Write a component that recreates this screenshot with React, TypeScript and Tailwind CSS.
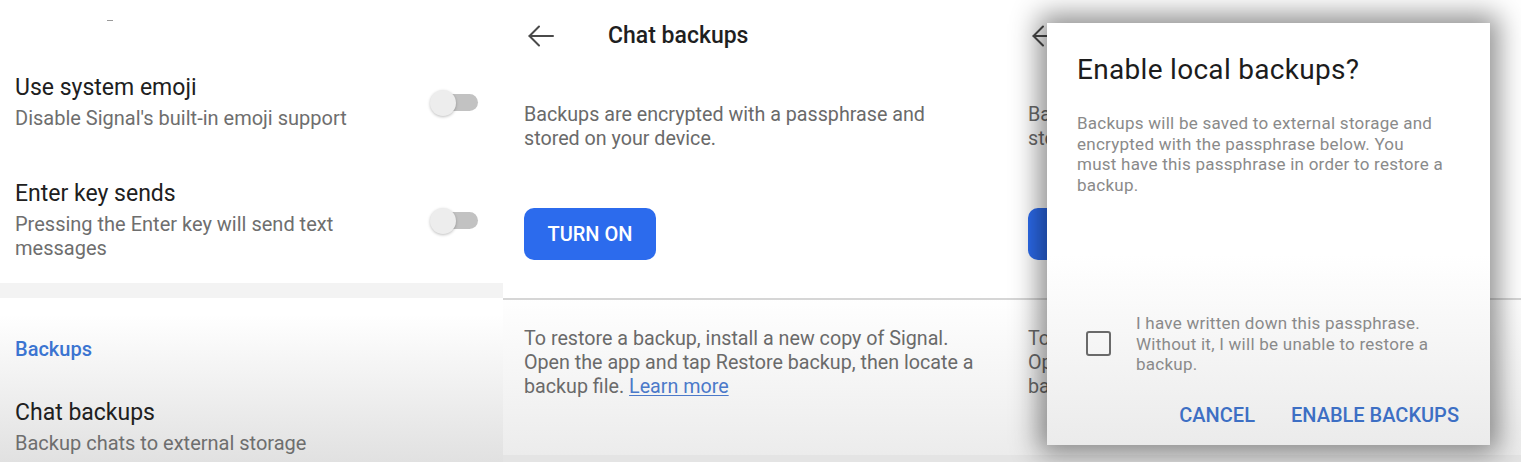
import React from "react";

const font = { fontFamily: "Roboto, 'Noto Sans', sans-serif" };

function BackArrow() {
  return (
    <svg width="26" height="22" viewBox="0 0 26 22" fill="none" stroke="#4a4a4a" strokeWidth="2" strokeLinecap="round" strokeLinejoin="round">
      <path d="M25 11H1.5" />
      <path d="M11 1.5L1.5 11 11 20.5" />
    </svg>
  );
}

function Toggle() {
  return (
    <div className="relative flex h-[26px] w-[48px] items-center">
      <div className="ml-[8px] h-[17px] w-[40px] rounded-full bg-[#c2c2c2]" />
      <div className="absolute left-0 top-0 h-[26px] w-[26px] rounded-full bg-[#ededed] shadow-[0_1px_3px_rgba(0,0,0,0.25)]" />
    </div>
  );
}

function SettingRow({ title, lines }: { title: string; lines: string[] }) {
  return (
    <div className="flex items-center justify-between pr-[25px]">
      <div>
        <div className="text-[23px] leading-[26px] text-[#202020]">{title}</div>
        <div className="mt-[5px] text-[20px] leading-[24px] text-[#6e6e6e]">
          {lines.map((l) => (
            <div key={l} className="whitespace-nowrap">{l}</div>
          ))}
        </div>
      </div>
      <Toggle />
    </div>
  );
}

function SettingsPanel() {
  return (
    <div className="flex h-[462px] w-[503px] shrink-0 flex-col bg-white">
      <div className="h-[75px] pl-[107px] pt-[20px]">
        <div className="h-[1px] w-[6px] bg-[#9a9a9a]" />
      </div>
      <div className="pl-[15px]">
        <SettingRow title="Use system emoji" lines={["Disable Signal's built-in emoji support"]} />
        <div className="h-[51px]" />
        <SettingRow title="Enter key sends" lines={["Pressing the Enter key will send text", "messages"]} />
      </div>
      <div className="mt-[23px] h-[15px] bg-[#f3f3f3]" />
      <div className="flex-1 bg-gradient-to-b from-white from-[10%] to-[#e1e1e1] pl-[15px]">
        <div className="mt-[39px] text-[20px] font-medium leading-[24px] text-[#3b74d1]">Backups</div>
        <div className="mt-[39px] text-[23px] leading-[26px] text-[#202020]">Chat backups</div>
        <div className="mt-[5px] text-[20px] leading-[24px] text-[#6e6e6e]">Backup chats to external storage</div>
      </div>
    </div>
  );
}

function BackupsScreen() {
  return (
    <div className="flex h-full flex-col bg-gradient-to-b from-white from-[64%] to-[#ebebeb]">
      <div className="flex h-[72px] items-center pl-[25px]">
        <BackArrow />
        <div className="ml-[54px] text-[23px] font-medium text-[#1f1f1f]">Chat backups</div>
      </div>
      <div className="mt-[31px] pl-[21px] text-[19.7px] leading-[24px] text-[#6a6a6a]">
        <div className="whitespace-nowrap">Backups are encrypted with a passphrase and</div>
        <div className="whitespace-nowrap">stored on your device.</div>
      </div>
      <div className="mt-[57px] pl-[21px]">
        <button className="flex h-[52px] w-[132px] items-center justify-center rounded-[10px] bg-[#2c6bed] text-[20px] font-medium text-white">
          TURN ON
        </button>
      </div>
      <div className="mt-[38px] h-[2px] bg-[#d6d6d6]" />
      <div className="mt-[27px] pl-[21px] text-[19.7px] leading-[24px] text-[#6a6a6a]">
        <div className="whitespace-nowrap">To restore a backup, install a new copy of Signal.</div>
        <div className="whitespace-nowrap">Open the app and tap Restore backup, then locate a</div>
        <div className="whitespace-nowrap">
          backup file. <span className="text-[#4b79c9] underline underline-offset-2">Learn more</span>
        </div>
      </div>
      <div className="flex-1" />
      <div className="h-[7px] bg-[#e4e4e4]" />
    </div>
  );
}

function EnableDialog() {
  return (
    <div className="absolute left-[40px] top-[23px] flex h-[422px] w-[443px] flex-col bg-gradient-to-b from-white from-[55%] to-[#ebebeb] pl-[30px] pr-[31px] pt-[31px] shadow-[0_0_26px_8px_rgba(0,0,0,0.45)]">
      <div className="whitespace-nowrap text-[28px] leading-[32px] tracking-[0.3px] text-[#1c1c1c]">Enable local backups?</div>
      <div className="mt-[27px] text-[17px] leading-[20.7px] tracking-[0.25px] text-[#8a8a8a]">
        <div className="whitespace-nowrap">Backups will be saved to external storage and</div>
        <div className="whitespace-nowrap">encrypted with the passphrase below. You</div>
        <div className="whitespace-nowrap">must have this passphrase in order to restore a</div>
        <div className="whitespace-nowrap">backup.</div>
      </div>
      <div className="h-[117px]" />
      <div className="flex items-center">
        <div className="ml-[9px] h-[25px] w-[25px] shrink-0 rounded-[3px] border-[2.5px] border-[#6a6a6a]" />
        <div className="ml-[25px] text-[17px] leading-[20.7px] tracking-[0.25px] text-[#8a8a8a]">
          <div className="whitespace-nowrap">I have written down this passphrase.</div>
          <div className="whitespace-nowrap">Without it, I will be unable to restore a</div>
          <div className="whitespace-nowrap">backup.</div>
        </div>
      </div>
      <div className="mt-[28px] flex justify-end gap-[36px] text-[20px] font-medium leading-[24px] text-[#3d6fc4]">
        <span>CANCEL</span>
        <span>ENABLE BACKUPS</span>
      </div>
    </div>
  );
}

export default function App() {
  return (
    <div className="flex h-[462px] w-[1521px] overflow-hidden bg-white" style={font}>
      <SettingsPanel />
      <div className="h-[462px] w-[504px] shrink-0">
        <BackupsScreen />
      </div>
      <div className="relative h-[462px] w-[514px] shrink-0">
        <BackupsScreen />
        <EnableDialog />
      </div>
    </div>
  );
}
